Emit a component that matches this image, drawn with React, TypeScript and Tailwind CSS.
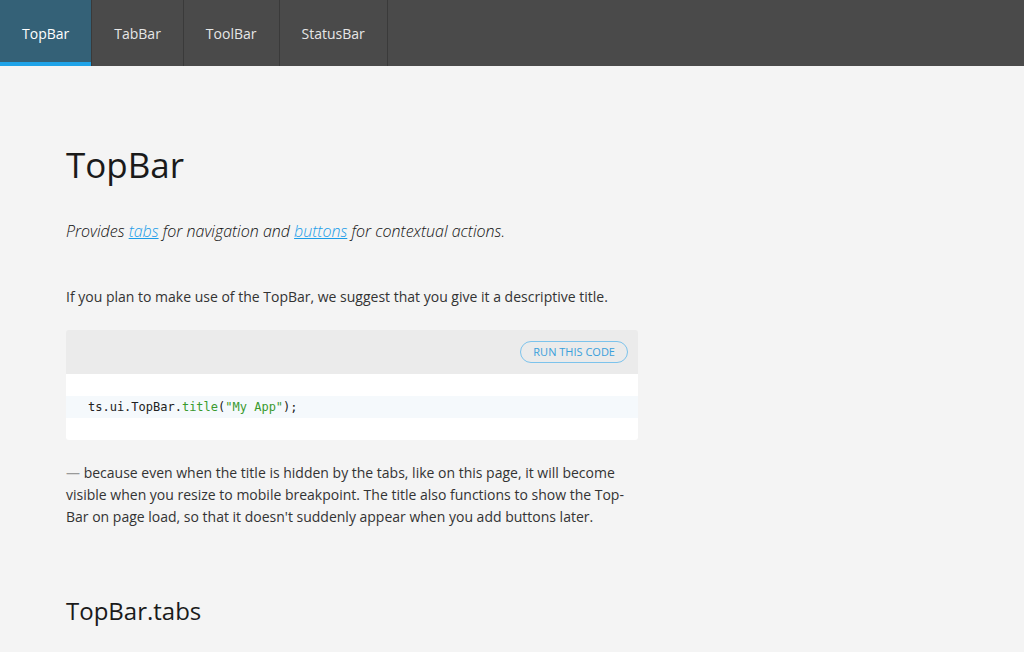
import React from 'react';

const tabs = ['TopBar', 'TabBar', 'ToolBar', 'StatusBar'];

export default function App() {
  return (
    <div className="min-h-[652px] bg-[#f4f4f4] font-['Open_Sans',sans-serif] text-[#222]">
      <div className="flex h-[66px] bg-[#4a4a4a]">
        {tabs.map((t, i) => (
          <div
            key={t}
            className={
              i === 0
                ? 'relative flex items-center px-[22px] bg-[#346177] text-[14px] text-white'
                : 'flex items-center px-[22px] border-l border-[#3a3a3a] text-[14px] text-[#e6e6e6]'
            }
          >
            {t}
            {i === 0 && <span className="absolute left-0 right-0 bottom-0 h-[4px] bg-[#1fa3e8]" />}
          </div>
        ))}
        <div className="border-l border-[#3a3a3a]" />
      </div>

      <div className="px-[66px] pt-[76px]">
        <h1 className="text-[35px] leading-[46px] text-[#1a1a1a]">TopBar</h1>
        <p className="mt-[31px] text-[16px] italic font-light text-[#111]">
          Provides <a className="text-[#1a9ce8] underline">tabs</a> for navigation and{' '}
          <a className="text-[#1a9ce8] underline">buttons</a> for contextual actions.
        </p>
        <p className="mt-[43px] text-[14px] leading-[22px] text-[#333]">
          If you plan to make use of the TopBar, we suggest that you give it a descriptive title.
        </p>
        <div className="mt-[22px] w-[572px] rounded-[3px] overflow-hidden">
          <div className="flex h-[44px] items-center justify-end bg-[#ebebeb] px-[10px]">
            <button className="h-[22px] rounded-full border border-[#7cc3ec] px-[12px] text-[11px] text-[#3aa0dc]">
              RUN THIS CODE
            </button>
          </div>
          <div className="bg-white py-[22px]">
            <div className="bg-[#f5f9fc] px-[22px] h-[22px] flex items-center font-['DejaVu_Sans_Mono',monospace] text-[12px] text-[#222]">
              ts.ui.TopBar.<span className="text-[#3a9a2e]">title</span>(<span className="text-[#3a9a2e]">"My App"</span>);
            </div>
          </div>
        </div>
        <p className="mt-[22px] w-[572px] text-[14px] leading-[22px] text-[#333]">
          <span className="text-[#999]">—</span> because even when the title is hidden by the tabs, like on this page, it will become
          visible when you resize to mobile breakpoint. The title also functions to show the Top-Bar on page load, so that it
          doesn't suddenly appear when you add buttons later.
        </p>
        <h2 className="mt-[66px] text-[24px] leading-[34px] text-[#1a1a1a]">TopBar.tabs</h2>
      </div>
    </div>
  );
}
